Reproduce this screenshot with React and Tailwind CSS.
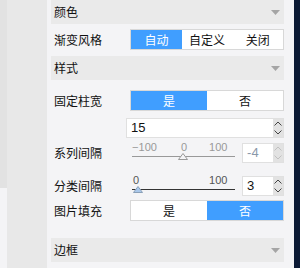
import React from "react";

const cjk = { fontFamily: '"Noto Sans CJK SC", "Noto Sans", sans-serif' };
const num = { fontFamily: '"Liberation Sans", Arial, sans-serif' };

// Section header band with caret
const Section = ({ title, className }) => (
  <div className={`h-[24px] bg-[#eaeaea] flex items-center justify-between pl-[3px] pr-[4px] ${className}`}>
    <span className="text-[12px] text-[#111]">{title}</span>
    <svg width="9" height="5" viewBox="0 0 9 5">
      <polygon points="0,0 9,0 4.5,5" fill="#a5a5a5" />
    </svg>
  </div>
);

// Label + control row
const Row = ({ label, children, className }) => (
  <div className={`flex items-center ${className}`}>
    <div className="w-[79px] pl-[3px] text-[12px] text-[#111] shrink-0">{label}</div>
    <div className="flex-1">{children}</div>
  </div>
);

const Segmented = ({ options, active }) => (
  <div className="flex h-[21px] border border-[#d8d8d8] bg-white">
    {options.map((o, i) => (
      <div
        key={o}
        className={`flex-1 flex items-center justify-center text-[12px] ${
          i === active ? "bg-[#409eff] text-white" : "text-[#111]"
        }`}
      >
        {o}
      </div>
    ))}
  </div>
);

const Spinner = ({ disabled }) => {
  const c = disabled ? "#c0c0c0" : "#444";
  return (
    <div className="w-[10px] bg-[#e2e2e2] flex flex-col items-center justify-center gap-[4px]">
      <svg width="8" height="5" viewBox="0 0 8 5">
        <polyline points="0.5,4.5 4,1 7.5,4.5" fill="none" stroke={c} strokeWidth="1" />
      </svg>
      <svg width="8" height="5" viewBox="0 0 8 5">
        <polyline points="0.5,0.5 4,4 7.5,0.5" fill="none" stroke={c} strokeWidth="1" />
      </svg>
    </div>
  );
};

const NumBox = ({ value, disabled, className }) => (
  <div className={`flex h-[20px] bg-white border border-[#e0e0e0] ${className}`}>
    <div
      className={`flex-1 flex items-center pl-[4px] text-[13px] ${disabled ? "text-[#8a98aa]" : "text-[#111]"}`}
      style={num}
    >
      {value}
    </div>
    <Spinner disabled={disabled} />
  </div>
);

const Slider = ({ labels, pos, disabled }) => (
  <div className="relative w-[103px] h-[20px]" style={num}>
    {labels.map((l) => (
      <span
        key={l.t}
        className={`absolute top-[-1px] text-[11px] leading-none ${disabled ? "text-[#999]" : "text-[#555]"}`}
        style={{ left: l.x }}
      >
        {l.t}
      </span>
    ))}
    <div className={`absolute left-0 right-0 top-[13px] h-px ${disabled ? "bg-[#999]" : "bg-[#333]"}`} />
    <svg className="absolute top-[10px]" style={{ left: pos - 5 }} width="10" height="7" viewBox="0 0 10 7">
      <polygon
        points="5,0.5 9.5,6.5 0.5,6.5"
        fill={disabled ? "#f4f4f6" : "#a9c7ea"}
        stroke={disabled ? "#999" : "#8aa0b8"}
        strokeWidth="1"
      />
    </svg>
  </div>
);

export default function App() {
  return (
    <div className="w-[300px] h-[268px] flex overflow-hidden bg-[#f4f4f6]" style={cjk}>
      <div className="w-[7px] flex flex-col">
        <div className="h-[188px] bg-[#e2e2e2]" />
        <div className="flex-1 bg-[#f4f4f6]" />
      </div>
      <div className="w-[41px] bg-[#e8e8e8]" />
      <div className="flex-1 pl-[4px] pr-[10px] flex flex-col">
        <Section title="颜色" />
        <Row label="渐变风格" className="mt-[5px]">
          <Segmented options={["自动", "自定义", "关闭"]} active={0} />
        </Row>
        <Section title="样式" className="mt-[6px]" />
        <Row label="固定柱宽" className="mt-[10px]">
          <Segmented options={["是", "否"]} active={0} />
        </Row>
        <div className="mt-[7px] pl-[75px]">
          <NumBox value="15" />
        </div>
        <Row label="系列间隔" className="mt-[5px]">
          <div className="flex items-center">
            <div className="pl-[2px]">
              <Slider
                disabled
                pos={51}
                labels={[
                  { t: "−100", x: 0 },
                  { t: "0", x: 49 },
                  { t: "100", x: 77 },
                ]}
              />
            </div>
            <NumBox value="-4" disabled className="ml-[7px] w-[42px]" />
          </div>
        </Row>
        <Row label="分类间隔" className="mt-[13px]">
          <div className="flex items-center">
            <div className="pl-[2px]">
              <Slider
                pos={6}
                labels={[
                  { t: "0", x: 1 },
                  { t: "100", x: 77 },
                ]}
              />
            </div>
            <NumBox value="3" className="ml-[7px] w-[42px]" />
          </div>
        </Row>
        <Row label="图片填充" className="mt-[4px]">
          <Segmented options={["是", "否"]} active={1} />
        </Row>
        <Section title="边框" className="mt-[17px]" />
      </div>
      <div className="w-[6px] bg-[#0c1a35]" />
    </div>
  );
}
